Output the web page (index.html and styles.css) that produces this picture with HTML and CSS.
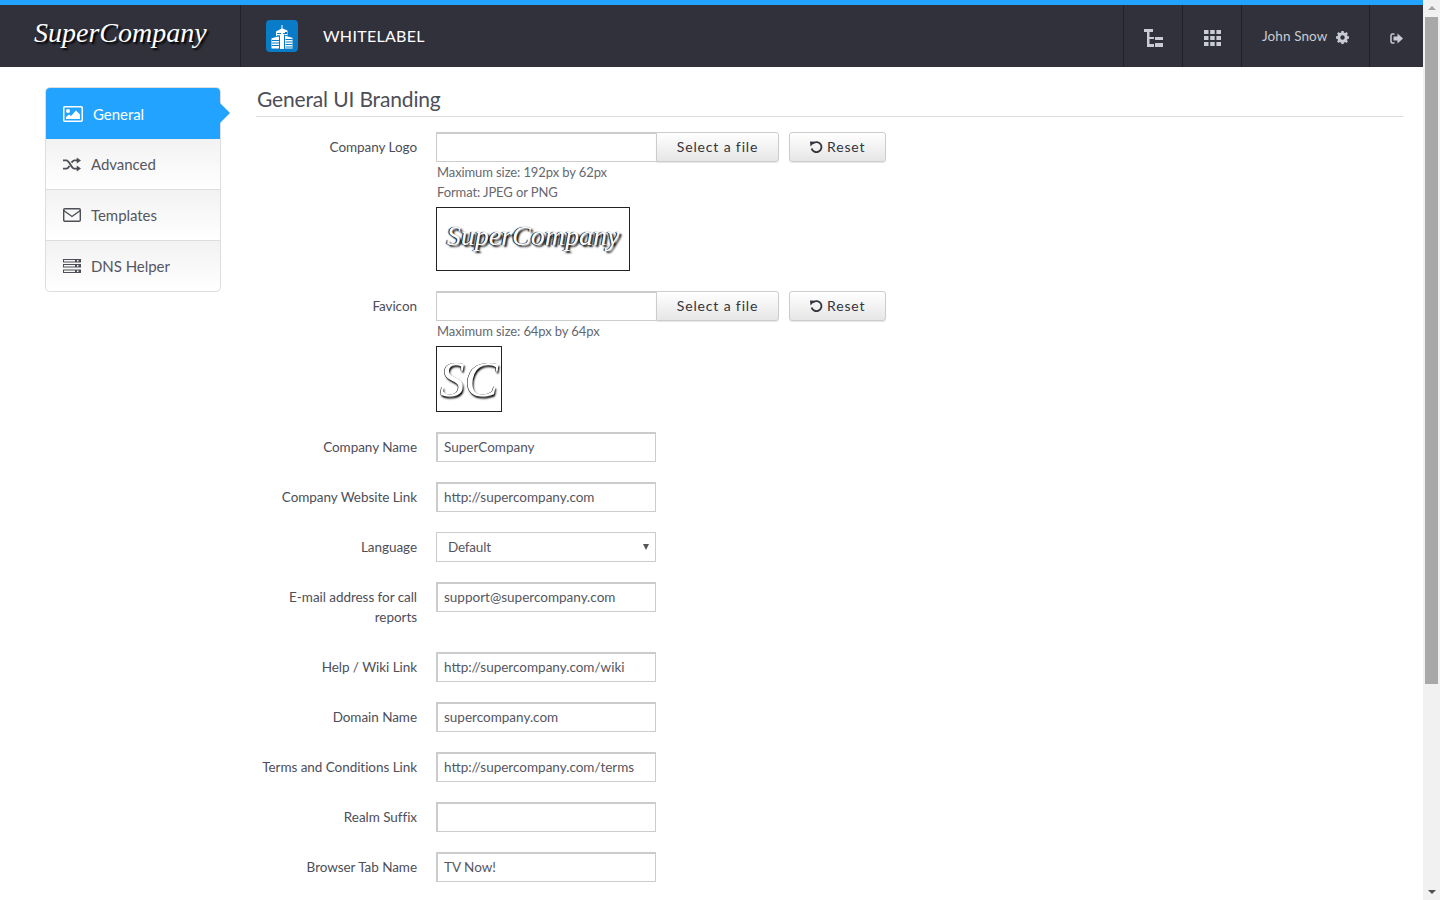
FILE: index.html
```html
<!DOCTYPE html>
<html lang="en">
<head>
    <meta charset="UTF-8">
    <title>Whitelabel</title>
    <link rel="stylesheet" href="styles.css">
</head>
<body>
    <div class="window">
        <div class="page">
            <header class="topbar">
                <div class="brand"><span class="brand-text">SuperCompany</span></div>
                <div class="module">
                    <span class="module-icon">
                        <svg width="22" height="25" viewBox="0 0 22 25">
                            <path fill="#fff" d="M5 7.500l5.500-3V1h1v3.500L16.500 6.500V25H5z"/>
                            <path fill="#fff" stroke="#0a7cc7" d="M0 14l8.500-2.500V25H0z"/>
                            <path fill="#fff" stroke="#0a7cc7" d="M13.500 11l8.500 2.500V25h-8.500z"/>
                            <path stroke="#0a7cc7" d="M6 9.500h4M12 9.500h4M6 12h2M14 8.500h2M1 16.500h7M1 19h7M1 21.500h7M14.500 15.500h7M14.500 18h7M14.500 20.500h7M14.500 23h7"/>
                        </svg>
                    </span>
                    <span class="module-name">WHITELABEL</span>
                </div>
                <nav class="top-actions">
                    <a class="top-btn">
                        <svg width="19" height="18" viewBox="0 0 19 18" fill="#c9ccd4">
                            <path d="M0 0h9v3H0zM3 3h2.500v15H3zM3 8h7v2H3zM3 15h7v3H3zM11 8h8v3h-8zM11 14h8v4h-8z"/>
                        </svg>
                    </a>
                    <a class="top-btn">
                        <svg width="17" height="16" viewBox="0 0 17 16" fill="#c9ccd4">
                            <path d="M0 0h4.500v4H0zM6.200 0h4.500v4H6.200zM12.400 0H17v4h-4.600zM0 6h4.500v4H0zM6.200 6h4.500v4H6.200zM12.400 6H17v4h-4.600zM0 12h4.500v4H0zM6.200 12h4.500v4H6.200zM12.400 12H17v4h-4.600z"/>
                        </svg>
                    </a>
                    <a class="top-user">
                        <span>John Snow</span>
                        <svg width="13" height="13" viewBox="0 0 14 14" class="gear">
                            <circle cx="7" cy="7" r="4" fill="none" stroke="#c9ccd4" stroke-width="3.200"/>
                            <path stroke="#c9ccd4" stroke-width="2.600" d="M7 0v3M7 11v3M0 7h3M11 7h3M2 2l2 2M10 10l2 2M12 2l-2 2M4 10l-2 2"/>
                        </svg>
                    </a>
                    <a class="top-btn top-exit">
                        <svg width="13" height="11" viewBox="0 0 13 11">
                            <path d="M4.500 1H2.500A1.500 1.500 0 0 0 1 2.500v6A1.500 1.500 0 0 0 2.500 10h2" fill="none" stroke="#c9ccd4" stroke-width="1.500"/>
                            <path fill="#c9ccd4" d="M3.500 3.500H7.500V.5L13 5.500l-5.500 5v-3h-4z"/>
                        </svg>
                    </a>
                </nav>
            </header>

            <div class="layout">
                <aside class="side-menu">
                    <a class="side-item active">
                        <svg width="20" height="16" viewBox="0 0 20 16">
                            <rect x=".75" y=".75" width="18.500" height="14.500" rx="1" fill="none" stroke="#fff" stroke-width="1.500"/>
                            <circle cx="5" cy="5" r="2" fill="#fff"/>
                            <path fill="#fff" d="M3 13v-2l3-2.500 2 1.500 5-5.500 4 4V13z"/>
                        </svg>
                        <span>General</span>
                    </a>
                    <a class="side-item">
                        <svg width="18" height="15" viewBox="0 0 19 15" fill="none" stroke="#4d4e57" stroke-width="2">
                            <path d="M0 3.200h3.500c3.500 0 5 8.600 8.500 8.600h3M0 11.800h3.500c1.400 0 2.400-1.300 3.300-2.800M9 5.500c.9-1.300 1.800-2.300 3-2.300h3"/>
                            <path fill="#4d4e57" stroke="none" d="M14.500 0L19 3.200l-4.500 3.200zM14.500 8.600l4.500 3.200-4.500 3.200z"/>
                        </svg>
                        <span>Advanced</span>
                    </a>
                    <a class="side-item">
                        <svg width="18" height="14" viewBox="0 0 18 14" fill="none" stroke="#4d4e57" stroke-width="1.400">
                            <rect x=".7" y=".7" width="16.600" height="12.600" rx="1.200"/>
                            <path d="M.7 2.500L9 8.500l8.300-6"/>
                        </svg>
                        <span>Templates</span>
                    </a>
                    <a class="side-item">
                        <svg width="18" height="14" viewBox="0 0 18 14" fill="#4d4e57">
                            <path d="M0 0h18v3.500H0zM0 5h18v3.500H0zM0 10.500h18V14H0z"/>
                            <path fill="#f8f8f8" d="M1 1h11v1.500H1zM14 1h1.500v1.500H14zM1 6h11v1.500H1zM14 6h1.500v1.500H14zM1 11.500h11V13H1zM14 11.500h1.500V13H14z"/>
                        </svg>
                        <span>DNS Helper</span>
                    </a>
                </aside>

                <main class="content">
                    <h1 class="section-title">General UI Branding</h1>

                    <div class="form-row">
                        <label class="form-label">Company Logo</label>
                        <div class="form-field">
                            <div class="file-line">
                                <span class="file-box"></span>
                                <button class="btn btn-file">Select a file</button>
                                <button class="btn btn-reset">
                                    <svg class="reset-icon" width="13" height="13" viewBox="0 0 13 13" fill="none" stroke="#33343c" stroke-width="1.800">
                                        <path d="M3 2.500A5 5 0 1 1 1.600 7.500"/>
                                        <path fill="#33343c" stroke="none" d="M0 .5l5 .3L.5 5.500z"/>
                                    </svg>
                                    Reset
                                </button>
                            </div>
                            <p class="hint">Maximum size: 192px by 62px</p>
                            <p class="hint">Format: JPEG or PNG</p>
                            <div class="preview preview-logo"><span>SuperCompany</span></div>
                        </div>
                    </div>

                    <div class="form-row">
                        <label class="form-label">Favicon</label>
                        <div class="form-field">
                            <div class="file-line">
                                <span class="file-box"></span>
                                <button class="btn btn-file">Select a file</button>
                                <button class="btn btn-reset">
                                    <svg class="reset-icon" width="13" height="13" viewBox="0 0 13 13" fill="none" stroke="#33343c" stroke-width="1.800">
                                        <path d="M3 2.500A5 5 0 1 1 1.600 7.500"/>
                                        <path fill="#33343c" stroke="none" d="M0 .5l5 .3L.5 5.500z"/>
                                    </svg>
                                    Reset
                                </button>
                            </div>
                            <p class="hint">Maximum size: 64px by 64px</p>
                            <div class="preview preview-icon"><span>SC</span></div>
                        </div>
                    </div>

                    <div class="form-row">
                        <label class="form-label">Company Name</label>
                        <div class="form-field"><input class="text-input" type="text" value="SuperCompany"></div>
                    </div>
                    <div class="form-row">
                        <label class="form-label">Company Website Link</label>
                        <div class="form-field"><input class="text-input" type="text" value="http://supercompany.com"></div>
                    </div>
                    <div class="form-row">
                        <label class="form-label">Language</label>
                        <div class="form-field">
                            <div class="select-box"><span>Default</span><i class="select-arrow"></i></div>
                        </div>
                    </div>
                    <div class="form-row">
                        <label class="form-label">E-mail address for call reports</label>
                        <div class="form-field"><input class="text-input" type="text" value="support@supercompany.com"></div>
                    </div>
                    <div class="form-row">
                        <label class="form-label">Help / Wiki Link</label>
                        <div class="form-field"><input class="text-input" type="text" value="http://supercompany.com/wiki"></div>
                    </div>
                    <div class="form-row">
                        <label class="form-label">Domain Name</label>
                        <div class="form-field"><input class="text-input" type="text" value="supercompany.com"></div>
                    </div>
                    <div class="form-row">
                        <label class="form-label">Terms and Conditions Link</label>
                        <div class="form-field"><input class="text-input" type="text" value="http://supercompany.com/terms"></div>
                    </div>
                    <div class="form-row">
                        <label class="form-label">Realm Suffix</label>
                        <div class="form-field"><input class="text-input" type="text" value=""></div>
                    </div>
                    <div class="form-row">
                        <label class="form-label">Browser Tab Name</label>
                        <div class="form-field"><input class="text-input" type="text" value="TV Now!"></div>
                    </div>
                </main>
            </div>
        </div>

        <div class="scrollbar">
            <i class="scroll-up"></i>
            <div class="scroll-track"><div class="scroll-thumb"></div></div>
            <i class="scroll-down"></i>
        </div>
    </div>
</body>
</html>
```

FILE: styles.css
```css
* {
    box-sizing: border-box;
}

html, body {
    margin: 0;
    height: 100%;
    overflow: hidden;
}

body {
    background: #fff;
    font-family: Lato, "Open Sans", sans-serif;
    font-size: 13.5px;
    letter-spacing: -.05px;
    color: #4d4e57;
}

.window {
    display: flex;
    height: 900px;
}

.page {
    flex: 1;
    min-width: 0;
    height: 900px;
    overflow: hidden;
}

/* top bar */
.topbar {
    display: flex;
    height: 67px;
    background: #30313b;
    border-top: 5px solid #22a3ff;
    color: #fff;
}

.brand {
    width: 241px;
    border-right: 1px solid #20212a;
    padding: 0 0 0 34px;
    display: flex;
    align-items: center;
}

.brand-text {
    font-family: "Liberation Serif", serif;
    font-style: italic;
    font-size: 28px;
    letter-spacing: 0;
    color: #fff;
    text-shadow: 2px 2px 2px #000;
    margin-top: -6px;
}

.module {
    display: flex;
    align-items: center;
    padding-left: 25px;
}

.module-icon {
    width: 32px;
    height: 32px;
    background: #0a7cc7;
    border-radius: 4px;
    display: flex;
    align-items: center;
    justify-content: center;
    overflow: hidden;
}

.module-name {
    margin: -2px 0 0 25px;
    font-size: 16px;
    letter-spacing: .3px;
}

.top-actions {
    margin-left: auto;
    display: flex;
}

.top-btn {
    width: 59px;
    padding-top: 4px;
    border-left: 1px solid #20212a;
    display: flex;
    align-items: center;
    justify-content: center;
}

.top-exit {
    width: 54px;
}

.top-user {
    width: 128px;
    border-left: 1px solid #20212a;
    display: flex;
    align-items: center;
    padding-left: 20px;
    color: #c9ccd4;
    font-size: 13.5px;
    letter-spacing: .1px;
}

.gear {
    margin-left: 9px;
    margin-top: 3px;
}

/* page layout */
.layout {
    display: flex;
    padding: 20px 20px 0 45px;
}

.side-menu {
    width: 176px;
    height: 205px;
    flex: none;
    border: 1px solid #ddd;
    border-radius: 5px;
    background: #fff;
}

.side-item {
    display: flex;
    align-items: center;
    height: 51px;
    padding-left: 17px;
    font-size: 15px;
    color: #55565f;
    background: linear-gradient(#f2f2f2, #fff);
    border-bottom: 1px solid #ddd;
}

.side-item:last-child {
    height: 50px;
    border-bottom: 0;
    border-radius: 0 0 5px 5px;
}

.side-item span {
    margin-left: 10px;
}

.side-item.active {
    position: relative;
    background: #22a3ff;
    color: #fff;
    border: 0;
    border-radius: 4px 4px 0 0;
}

.side-item.active::after {
    content: "";
    position: absolute;
    right: -10px;
    top: 15px;
    border-left: 10px solid #22a3ff;
    border-top: 10px solid transparent;
    border-bottom: 10px solid transparent;
}

.content {
    flex: 1;
    margin-left: 35px;
}

.section-title {
    margin: 0 0 15px;
    height: 30px;
    font-size: 21px;
    font-weight: 400;
    letter-spacing: -.15px;
    line-height: 24px;
    padding-left: 1px;
    color: #4d4e57;
    border-bottom: 1px solid #ddd;
}

/* form */
.form-row {
    display: flex;
    margin-bottom: 20px;
}

.form-label {
    width: 161px;
    padding: 5px 0;
    margin-right: 19px;
    text-align: right;
    line-height: 20px;
    color: #4d4e57;
    flex: none;
}

.form-field {
    width: 460px;
}

.file-line {
    display: flex;
    height: 30px;
}

.file-box {
    width: 220px;
    border: 2px solid #ccc;
    border-right: 0;
    border-bottom-width: 1px;
    border-left-width: 1px;
}

.btn {
    font-family: inherit;
    font-size: 14px;
    letter-spacing: .85px;
    color: #33343c;
    background: linear-gradient(#fff, #e6e6e6);
    border: 1px solid #ccc;
    border-radius: 0 3px 3px 0;
    box-shadow: 0 1px 1px rgba(0, 0, 0, .1);
    padding: 0 0 2px;
}

.btn-file {
    width: 123px;
}

.btn-reset {
    width: 97px;
    margin-left: 10px;
    border-radius: 3px;
}

.reset-icon {
    vertical-align: -2px;
}

.hint {
    margin: 0;
    line-height: 20px;
    padding-left: 1px;
    font-size: 13px;
    letter-spacing: -.1px;
    color: #666770;
}

.preview {
    margin-top: 5px;
    border: 1px solid #222;
    display: flex;
    align-items: center;
    justify-content: center;
    font-family: "Liberation Serif", serif;
    font-style: italic;
    letter-spacing: 0;
    color: #fff;
}

.preview-logo {
    width: 194px;
    height: 64px;
    padding-bottom: 6px;
    font-size: 28px;
    text-shadow: -1px 0 1px #000, 2px 2px 2px #000;
}

.preview-icon {
    width: 66px;
    height: 66px;
    font-size: 50px;
    text-shadow: -.5px 0 .5px #000, 1px 2px 2px #000;
}

.text-input {
    display: block;
    width: 220px;
    height: 30px;
    border: 1px solid #ccc;
    border-top-width: 2px;
    border-left-width: 2px;
    padding: 0 6px 2px;
    font-family: inherit;
    font-size: 13.5px;
    letter-spacing: 0;
    color: #55565f;
    background: #fff;
}

.select-box {
    position: relative;
    width: 220px;
    height: 30px;
    border: 1px solid #ccc;
    padding-left: 11px;
    line-height: 28px;
    letter-spacing: -.2px;
    color: #55565f;
}

.select-arrow {
    position: absolute;
    right: 6px;
    top: 11px;
    border-top: 6px solid #555;
    border-left: 3px solid transparent;
    border-right: 3px solid transparent;
}

/* drawn scrollbar */
.scrollbar {
    width: 17px;
    flex: none;
    height: 900px;
    background: #f1f1f1;
    display: flex;
    flex-direction: column;
    align-items: center;
}

.scroll-up, .scroll-down {
    flex: none;
    margin-top: 6px;
    width: 0;
    height: 0;
    border-left: 4px solid transparent;
    border-right: 4px solid transparent;
    border-bottom: 4px solid #a3a3a3;
}

.scroll-down {
    margin: 0 0 6px;
    border-bottom: 0;
    border-top: 4px solid #505050;
}

.scroll-track {
    flex: 1;
    width: 100%;
    padding: 7px 2px 0;
}

.scroll-thumb {
    height: 667px;
    background: #a8a8a8;
}
```
